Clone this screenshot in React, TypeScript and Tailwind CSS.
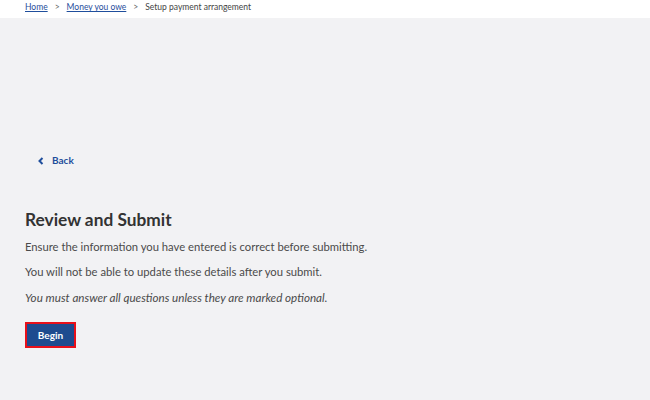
export default function App() {
  return (
    <div className="min-h-[400px] w-full bg-[#f2f2f4] font-['Lato',sans-serif] text-[#4a4a4a]">
      <div className="flex h-[18px] items-center gap-[7px] bg-white pb-[3px] pl-[25px] text-[8.5px] leading-none">
        <a href="#" className="text-[#1f4e9c] underline">Home</a>
        <span className="text-[#666]">&gt;</span>
        <a href="#" className="text-[#1f4e9c] underline">Money you owe</a>
        <span className="text-[#666]">&gt;</span>
        <span className="text-[#444]">Setup payment arrangement</span>
      </div>

      <div className="px-[25px]">
        <a href="#" className="ml-[13px] mt-[135px] flex items-center gap-[8px] text-[10px] font-bold text-[#1f4e9c]">
          <svg width="6" height="8" viewBox="0 0 6 8" fill="none">
            <path d="M4.5 1 L1.5 4 L4.5 7" stroke="#1f4e9c" strokeWidth="2" />
          </svg>
          Back
        </a>

        <h1 className="mt-[41px] text-[17.3px] font-bold leading-[22px] text-[#333]">Review and Submit</h1>
        <p className="mt-[8px] text-[11.25px] leading-[16px]">
          Ensure the information you have entered is correct before submitting.
        </p>
        <p className="mt-[9px] text-[11.25px] leading-[16px]">
          You will not be able to update these details after you submit.
        </p>
        <p className="mt-[10px] text-[11.65px] italic leading-[16px]">
          You must answer all questions unless they are marked optional.
        </p>

        <button className="mt-[16px] h-[26px] w-[51px] border-2 border-[#e8101a] bg-[#1e4b8f] text-[10px] font-bold text-white">
          Begin
        </button>
      </div>
    </div>
  );
}
